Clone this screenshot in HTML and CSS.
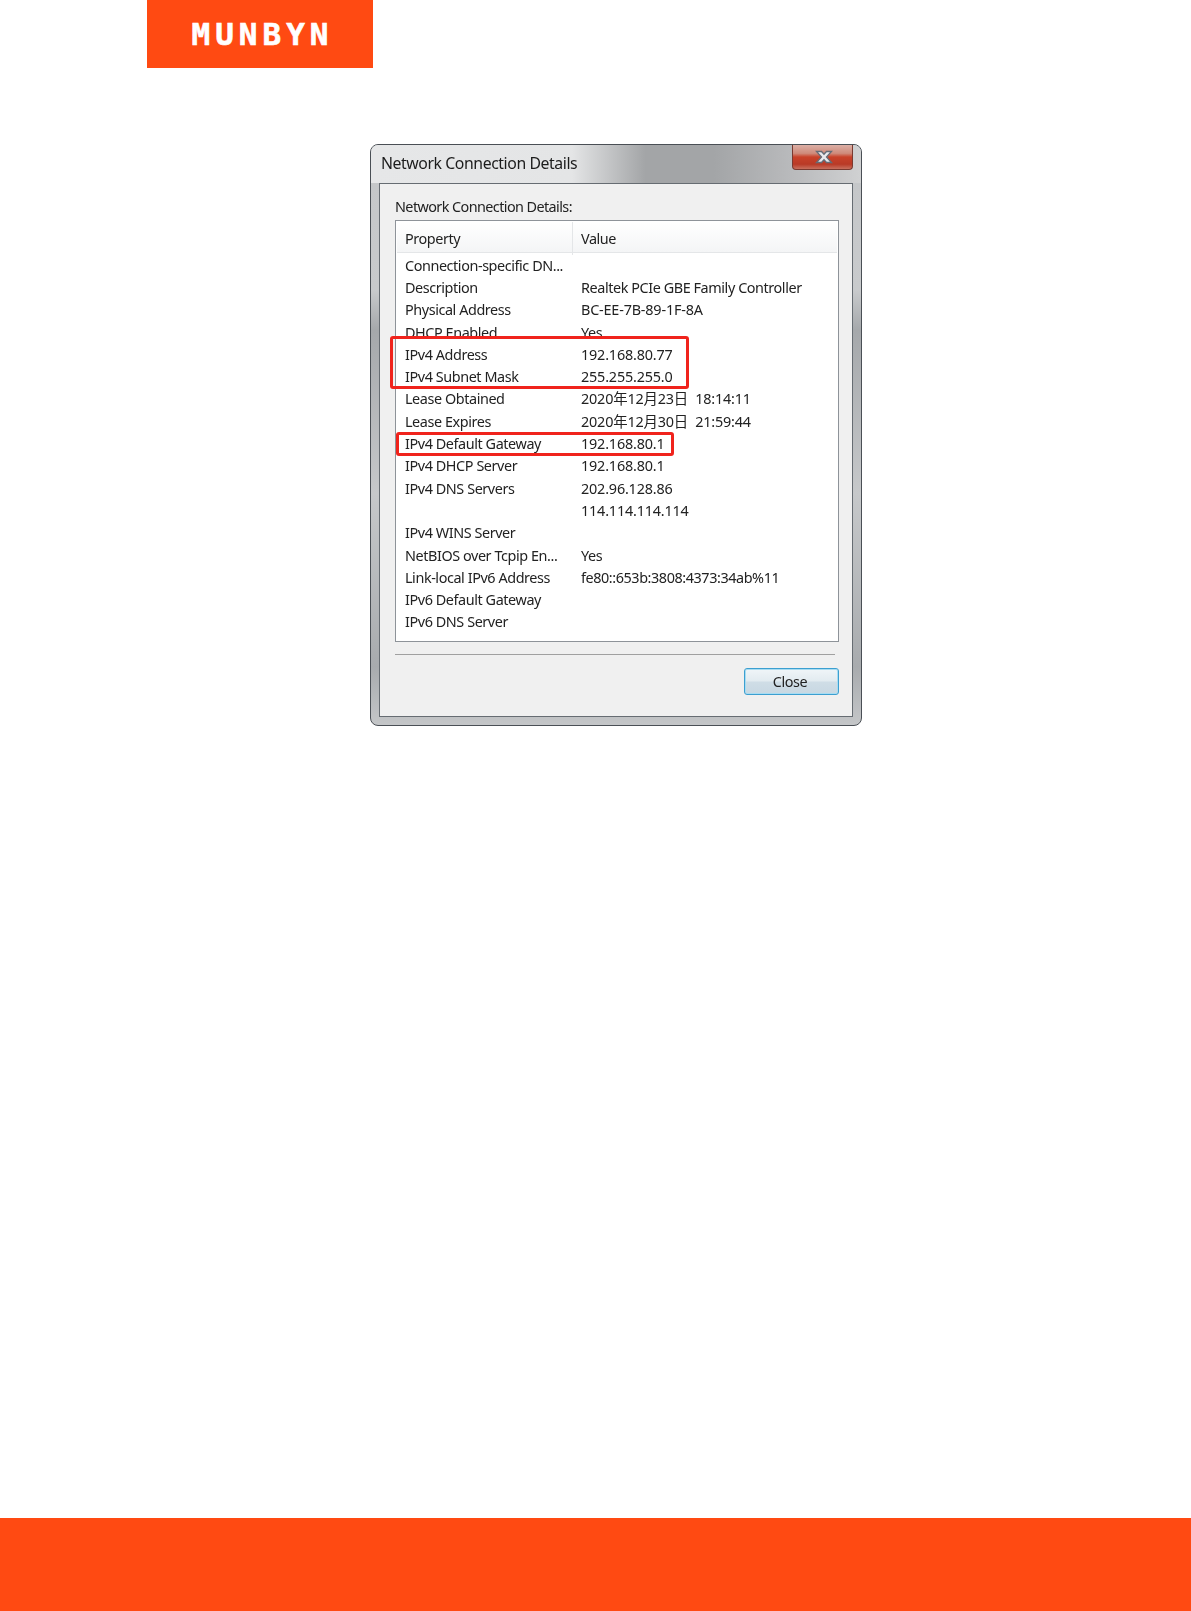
FILE: index.html
```html
<!DOCTYPE html>
<html lang="en">
<head>
    <meta charset="UTF-8">
    <title>Network Connection Details</title>
    <link rel="stylesheet" href="styles.css">
</head>
<body>
    <header class="brand">
        <span class="brand-name">MUNBYN</span>
    </header>

    <main class="dialog">
        <div class="title-bar">
            <span class="title-text">Network Connection Details</span>
            <div class="close-x">
                <svg width="20" height="14" viewBox="0 0 20 14">
                    <path d="M2.500 1.500h5l2.500 2.800 2.500-2.800h5l-5 5.500 5 5.500h-5l-2.500-2.800-2.500 2.800h-5l5-5.500z" fill="#e9e9ed" stroke="#666c76" stroke-width="1.300"/>
                </svg>
            </div>
        </div>

        <div class="panel">
            <p class="panel-label">Network Connection Details:</p>

            <div class="list">
                <div class="list-head">
                    <div class="head-prop">Property</div>
                    <div class="head-val">Value</div>
                </div>
                <div class="list-body">
                    <div class="row"><span>Connection-specific DN...</span><span></span></div>
                    <div class="row"><span>Description</span><span>Realtek PCIe GBE Family Controller</span></div>
                    <div class="row"><span>Physical Address</span><span class="num">BC-EE-7B-89-1F-8A</span></div>
                    <div class="row"><span>DHCP Enabled</span><span>Yes</span></div>
                    <div class="row"><span>IPv4 Address</span><span class="num">192.168.80.77</span></div>
                    <div class="row"><span>IPv4 Subnet Mask</span><span class="num">255.255.255.0</span></div>
                    <div class="row"><span>Lease Obtained</span><span class="num">2020年12月23日  18:14:11</span></div>
                    <div class="row"><span>Lease Expires</span><span class="num">2020年12月30日  21:59:44</span></div>
                    <div class="row"><span>IPv4 Default Gateway</span><span class="num">192.168.80.1</span></div>
                    <div class="row"><span>IPv4 DHCP Server</span><span class="num">192.168.80.1</span></div>
                    <div class="row"><span>IPv4 DNS Servers</span><span class="num">202.96.128.86</span></div>
                    <div class="row"><span></span><span class="num">114.114.114.114</span></div>
                    <div class="row"><span>IPv4 WINS Server</span><span></span></div>
                    <div class="row"><span>NetBIOS over Tcpip En...</span><span>Yes</span></div>
                    <div class="row"><span>Link-local IPv6 Address</span><span>fe80::653b:3808:4373:34ab%11</span></div>
                    <div class="row"><span>IPv6 Default Gateway</span><span></span></div>
                    <div class="row"><span>IPv6 DNS Server</span><span></span></div>
                </div>
            </div>

            <div class="separator"></div>

            <div class="actions">
                <button class="close-button">Close</button>
            </div>

            <div class="mark mark-address"></div>
            <div class="mark mark-gateway"></div>
        </div>
    </main>

    <footer class="bottom-band"></footer>
</body>
</html>
```

FILE: styles.css
```css
html, body {
    margin: 0;
    padding: 0;
    height: 1611px;
    background-color: #fff;
}

body {
    display: flex;
    flex-direction: column;
    overflow: hidden;
    font-family: "Noto Sans", "Noto Sans CJK SC", sans-serif;
    font-size: 14.4px;
    letter-spacing: -0.42px;
    color: #222;
}

.brand {
    width: 226px;
    height: 68px;
    margin-left: 147px;
    background-color: #ff4a12;
    display: flex;
    align-items: center;
    justify-content: center;
}

.brand-name {
    font-family: "DejaVu Sans Mono", monospace;
    font-weight: bold;
    font-size: 31px;
    letter-spacing: 5px;
    color: #fff;
    padding-left: 5px;
    -webkit-text-stroke: 0.6px #fff;
}

.dialog {
    box-sizing: border-box;
    width: 492px;
    height: 582px;
    margin: 76px 0 0 370px;
    border: 1px solid #4a4f55;
    border-radius: 8px;
    background: linear-gradient(#c4c6c8 0, #c8cacc 25%, #a5a8ab 32%, #c6c8ca 60%, #a8abae 90%, #c4c6c8 100%);
    padding: 0 8px 8px 8px;
    display: flex;
    flex-direction: column;
    filter: blur(0.4px);
}

.title-bar {
    height: 38px;
    margin: 0 -8px;
    padding: 0 8px 0 10px;
    border-radius: 7px 7px 0 0;
    background: linear-gradient(90deg, #e6e7e8 0, #e4e5e6 41%, #a3a5a7 56%, #a3a5a7 70%, #bcbdbf 88%, #d0d1d2 100%);
    display: flex;
    justify-content: space-between;
    align-items: flex-start;
}

.title-text {
    font-size: 15.8px;
    line-height: 36px;
    color: #1c1c1c;
}

.close-x {
    width: 61px;
    height: 25px;
    box-sizing: border-box;
    border: 1px solid #7a3a30;
    border-top: none;
    border-radius: 0 0 4px 4px;
    background: linear-gradient(#dcb0a6 0, #cf8a7a 35%, #c9422a 50%, #b93a26 80%, #c8705e 100%);
    padding-left: 3px;
    display: flex;
    align-items: center;
    justify-content: center;
}

.panel {
    position: relative;
    flex: 1;
    border: 1px solid #666c72;
    background-color: #f0f0f0;
    padding: 0 13px 0 15px;
}

.panel-label {
    margin: 0;
    height: 36px;
    line-height: 46px;
    letter-spacing: -0.58px;
}

.list {
    height: 418px;
    border: 1px solid #8e9399;
    background-color: #fff;
    padding: 1px;
}

.list-head {
    display: grid;
    grid-template-columns: 176px 1fr;
    height: 30px;
    line-height: 33px;
    border-bottom: 1px solid #e4e6e8;
    background: linear-gradient(#fff, #f4f5f6);
}

.head-prop {
    padding-left: 8px;
    border-right: 1px solid #e4e6e8;
}

.head-val {
    padding-left: 8px;
}

.list-body {
    padding-top: 1.7px;
}

.row {
    display: grid;
    grid-template-columns: 176px 1fr;
    height: 22.3px;
    line-height: 22.3px;
    padding-left: 8px;
    white-space: pre;
}

.row span:last-child {
    margin-left: -1px;
    padding-left: 1px;
}

.row .num {
    letter-spacing: -0.18px;
}

.separator {
    height: 1px;
    margin: 12px 4px 0 0;
    background-color: #a0a0a0;
}

.actions {
    display: flex;
    justify-content: flex-end;
    margin-top: 13px;
}

.close-button {
    width: 95px;
    height: 27px;
    border: 1px solid #3c9fd0;
    border-radius: 3px;
    background: linear-gradient(#f0f5f8, #e2ebf0 48%, #cfdde6 52%, #c8d8e2);
    box-shadow: inset 0 0 0 1px #a8dcf2;
    font-family: inherit;
    font-size: 14.4px;
    letter-spacing: -0.42px;
    color: #222;
    padding: 0 3px 0 0;
}

.mark {
    position: absolute;
    box-sizing: border-box;
    border: 3px solid #f0231c;
    border-radius: 3px;
}

.mark-address {
    left: 10px;
    top: 152px;
    width: 299px;
    height: 53px;
}

.mark-gateway {
    left: 16px;
    top: 248px;
    width: 278px;
    height: 24px;
}

.bottom-band {
    margin-top: auto;
    height: 93px;
    background-color: #ff4a12;
}
```
